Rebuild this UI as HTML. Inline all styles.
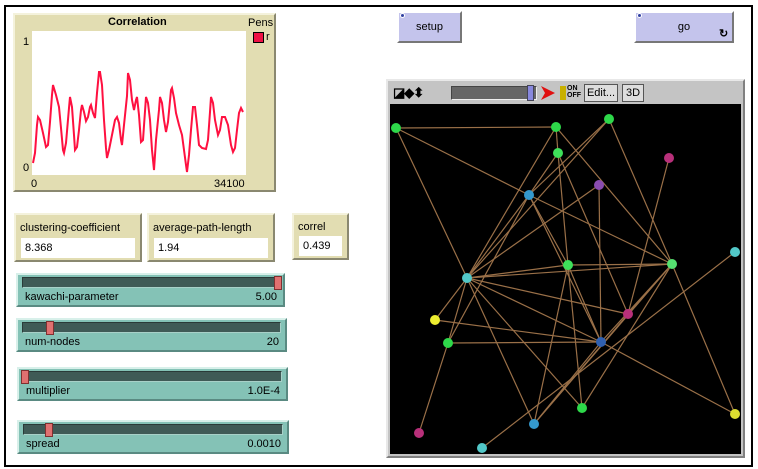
<!DOCTYPE html>
<html><head><meta charset="utf-8"><style>
*{margin:0;padding:0;box-sizing:border-box}
body{width:758px;height:469px;background:#fff;position:relative;overflow:hidden;font-family:"Liberation Sans",sans-serif;font-size:11px;color:#000}
.abs{position:absolute}
.outer{left:4px;top:5px;width:749px;height:462px;border:2px solid #000}
.tan{background:#e2ddb2;border:2px solid;border-color:#f4f2dc #8a8870 #8a8870 #f4f2dc}
.mon .lbl{position:absolute;left:4px;top:8px;font-size:11px}
.mon .val{position:absolute;left:5px;top:23px;right:5px;height:20px;background:#fff;padding:4px 4px;font-size:11px}
.btn{background:#c4c4ec;border:2px solid;border-color:#fff #777 #777 #fff;text-align:center;font-size:11px}
.sl{background:#84c2b6;border:2px solid;border-color:#d8f0ea #5a8a82 #5a8a82 #d8f0ea}
.sl .tr{position:absolute;left:4px;top:2px;right:4px;height:11px;background:#3f5a56;border:1px solid;border-color:#2a3a38 #a8d0c8 #a8d0c8 #2a3a38}
.sl .kn{position:absolute;top:1px;width:8px;height:14px;background:#e07070;border:1px solid #803030}
.sl .l{position:absolute;left:7px;top:16px;font-size:11px}
.sl .r{position:absolute;right:6px;top:16px;font-size:11px}
</style></head><body>
<div class="abs outer"></div>

<div class="abs tan" style="left:13px;top:13px;width:263px;height:179px"></div>
<div class="abs" style="left:32px;top:31px;width:214px;height:144px;background:#fff"></div>
<div class="abs" style="left:108px;top:16px;font-weight:bold;font-size:11px">Correlation</div>
<div class="abs" style="left:248px;top:17px;font-size:11px">Pens</div>
<div class="abs" style="left:253px;top:32px;width:11px;height:11px;background:#ee1144;border:1px solid #000"></div>
<div class="abs" style="left:266px;top:31px">r</div>
<div class="abs" style="left:23px;top:36px">1</div>
<div class="abs" style="left:23px;top:162px">0</div>
<div class="abs" style="left:31px;top:178px">0</div>
<div class="abs" style="left:214px;top:178px">34100</div>
<svg class="abs" style="left:0;top:0" width="300" height="200"><polyline fill="none" stroke="#ff1040" stroke-width="2" points="33,163 35,153 37,125 38,117 40,120 43,133 46,147 48,145 50,122 52,95 53,85 56,95 59,107 61,128 63,150 64,153 66,143 69,108 70,97 72,107 74,135 75,150 77,147 79,130 81,110 82,105 84,112 86,121 88,117 90,107 91,105 93,113 95,118 97,93 99,72 100,72 102,85 104,120 106,148 107,158 109,150 112,135 115,120 117,117 119,123 121,140 122,145 124,125 127,96 128,73 130,80 132,100 134,110 136,100 137,97 139,115 141,142 143,140 146,97 148,103 150,120 152,150 154,170 156,140 159,110 160,97 162,103 164,120 166,132 168,122 171,90 172,88 174,98 176,113 179,125 182,135 184,150 186,165 187,172 189,155 191,130 193,107 195,107 197,125 199,145 202,148 206,149 208,140 210,112 211,97 213,103 215,120 218,135 220,130 222,117 225,117 228,125 231,145 233,152 235,148 237,130 239,113 241,108 243,112"/></svg>

<div class="abs btn" style="left:397px;top:11px;width:65px;height:32px;line-height:28px">setup</div>
<div class="abs" style="left:400px;top:13px;width:5px;height:5px;border-radius:50%;background:#3040a0;border:1px solid #fff"></div>
<div class="abs btn" style="left:634px;top:11px;width:100px;height:32px;line-height:28px">go</div>
<div class="abs" style="left:637px;top:13px;width:5px;height:5px;border-radius:50%;background:#3040a0;border:1px solid #fff"></div>
<div class="abs" style="left:719px;top:27px;font-size:11px;font-weight:bold">&#x21BB;</div>

<div class="abs mon tan" style="left:14px;top:213px;width:128px;height:49px"><div class="lbl" style="top:7px">clustering-coefficient</div><div class="val">8.368</div></div>
<div class="abs mon tan" style="left:147px;top:213px;width:128px;height:49px"><div class="lbl" style="top:7px">average-path-length</div><div class="val">1.94</div></div>
<div class="abs mon tan" style="left:292px;top:213px;width:57px;height:47px"><div class="lbl" style="top:6px">correl</div><div class="val" style="top:21px">0.439</div></div>

<div class="abs sl" style="left:16px;top:273px;width:269px;height:34px"><div class="tr"></div><div class="kn" style="left:256px"></div><div class="l">kawachi-parameter</div><div class="r">5.00</div></div>
<div class="abs sl" style="left:16px;top:318px;width:271px;height:34px"><div class="tr"></div><div class="kn" style="left:28px"></div><div class="l">num-nodes</div><div class="r">20</div></div>
<div class="abs sl" style="left:17px;top:367px;width:271px;height:34px"><div class="tr"></div><div class="kn" style="left:2px"></div><div class="l">multiplier</div><div class="r">1.0E-4</div></div>
<div class="abs sl" style="left:17px;top:420px;width:272px;height:34px"><div class="tr"></div><div class="kn" style="left:26px"></div><div class="l">spread</div><div class="r">0.0010</div></div>

<div class="abs" style="left:386px;top:79px;width:359px;height:379px;background:#c4c4c4;border:2px solid;border-color:#e8e8e8 #808080 #808080 #e8e8e8"></div>
<div class="abs" style="left:393px;top:85px;font-size:13px;font-weight:bold;letter-spacing:-1px">◪◆⬍</div>
<div class="abs" style="left:451px;top:86px;width:86px;height:14px;background:#666;border:1px solid;border-color:#444 #eee #eee #444"></div>
<div class="abs" style="left:527px;top:85px;width:7px;height:16px;background:#8888dd;border:1px solid #445"></div>
<svg class="abs" style="left:540px;top:85px" width="16" height="16"><path d="M1 1 L15 8 L1 15 L5 8 Z" fill="#e01010"/></svg>
<div class="abs" style="left:560px;top:86px;width:6px;height:14px;background:#c8b000"></div>
<div class="abs" style="left:567px;top:85px;font-size:7px;line-height:7px;font-weight:bold">ON<br>OFF</div>
<div class="abs" style="left:584px;top:84px;width:34px;height:18px;border:1px solid #555;background:#ddd;font-size:11px;line-height:16px;text-align:center">Edit...</div>
<div class="abs" style="left:622px;top:84px;width:22px;height:18px;border:1px solid #555;background:#ddd;font-size:11px;line-height:16px;text-align:center">3D</div>
<div class="abs" style="left:390px;top:104px;width:351px;height:350px;background:#000"></div>
<svg class="abs" style="left:0;top:0" width="758" height="469"><g stroke="#9a7048" stroke-width="1.2">
<line x1="396" y1="128" x2="556" y2="127"/><line x1="396" y1="128" x2="529" y2="195"/><line x1="396" y1="128" x2="467" y2="278"/>
<line x1="556" y1="127" x2="558" y2="153"/><line x1="556" y1="127" x2="467" y2="278"/><line x1="556" y1="127" x2="672" y2="264"/>
<line x1="609" y1="119" x2="467" y2="278"/><line x1="609" y1="119" x2="529" y2="195"/><line x1="609" y1="119" x2="672" y2="264"/>
<line x1="558" y1="153" x2="568" y2="265"/><line x1="558" y1="153" x2="529" y2="195"/><line x1="558" y1="153" x2="628" y2="314"/>
<line x1="669" y1="158" x2="628" y2="314"/><line x1="599" y1="185" x2="601" y2="342"/><line x1="599" y1="185" x2="467" y2="278"/>
<line x1="529" y1="195" x2="672" y2="264"/><line x1="529" y1="195" x2="568" y2="265"/><line x1="529" y1="195" x2="601" y2="342"/><line x1="529" y1="195" x2="448" y2="343"/><line x1="529" y1="195" x2="467" y2="278"/>
<line x1="467" y1="278" x2="568" y2="265"/><line x1="467" y1="278" x2="672" y2="264"/><line x1="467" y1="278" x2="628" y2="314"/><line x1="467" y1="278" x2="601" y2="342"/><line x1="467" y1="278" x2="448" y2="343"/><line x1="467" y1="278" x2="435" y2="320"/><line x1="467" y1="278" x2="582" y2="408"/><line x1="467" y1="278" x2="534" y2="424"/>
<line x1="568" y1="265" x2="672" y2="264"/><line x1="568" y1="265" x2="582" y2="408"/><line x1="568" y1="265" x2="534" y2="424"/><line x1="568" y1="265" x2="601" y2="342"/>
<line x1="672" y1="264" x2="628" y2="314"/><line x1="672" y1="264" x2="601" y2="342"/><line x1="672" y1="264" x2="735" y2="414"/><line x1="672" y1="264" x2="582" y2="408"/><line x1="672" y1="264" x2="534" y2="424"/>
<line x1="735" y1="252" x2="482" y2="448"/><line x1="435" y1="320" x2="601" y2="342"/><line x1="448" y1="343" x2="601" y2="342"/><line x1="448" y1="343" x2="419" y2="433"/>
<line x1="601" y1="342" x2="735" y2="414"/><line x1="601" y1="342" x2="534" y2="424"/><line x1="628" y1="314" x2="534" y2="424"/>
</g><g>
<circle cx="396" cy="128" r="5" fill="#2ed84a"/><circle cx="556" cy="127" r="5" fill="#2ed84a"/><circle cx="609" cy="119" r="5" fill="#2ed84a"/><circle cx="558" cy="153" r="5" fill="#3ee05a"/>
<circle cx="669" cy="158" r="5" fill="#b8307a"/><circle cx="599" cy="185" r="5" fill="#8a4cb0"/><circle cx="529" cy="195" r="5" fill="#3498cc"/><circle cx="467" cy="278" r="5" fill="#52c8c8"/>
<circle cx="568" cy="265" r="5" fill="#3ee05a"/><circle cx="672" cy="264" r="5" fill="#55e070"/><circle cx="735" cy="252" r="5" fill="#52c8c8"/><circle cx="628" cy="314" r="5" fill="#b8307a"/>
<circle cx="435" cy="320" r="5" fill="#eeee30"/><circle cx="448" cy="343" r="5" fill="#2ed84a"/><circle cx="601" cy="342" r="5" fill="#3060b0"/><circle cx="582" cy="408" r="5" fill="#2ed84a"/>
<circle cx="534" cy="424" r="5" fill="#3498cc"/><circle cx="419" cy="433" r="5" fill="#b8307a"/><circle cx="482" cy="448" r="5" fill="#52c8c8"/><circle cx="735" cy="414" r="5" fill="#dddd30"/>
</g></svg>
</body></html>
